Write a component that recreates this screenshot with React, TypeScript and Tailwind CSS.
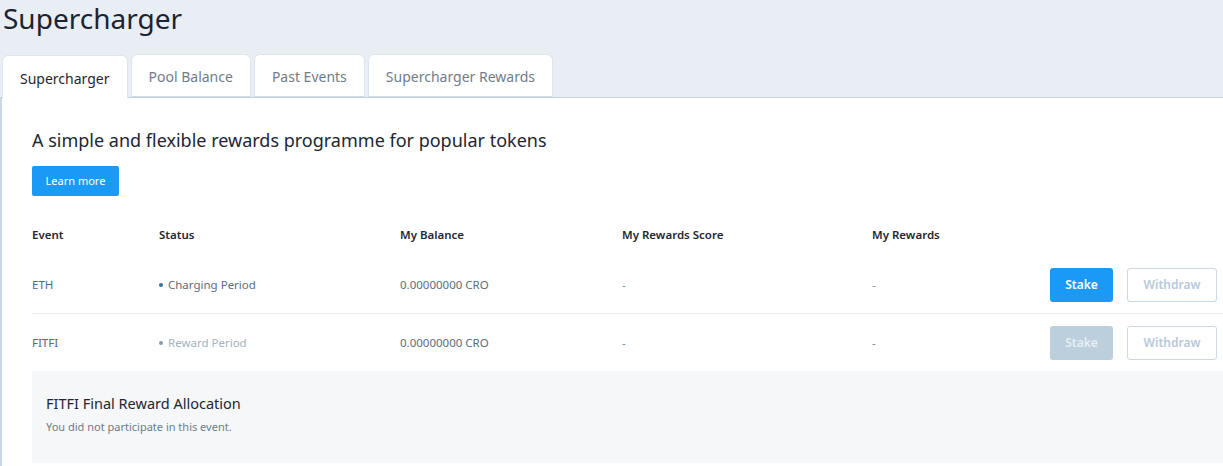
const font = { fontFamily: '"Noto Sans", "Open Sans", sans-serif' };

const tabs = ['Supercharger', 'Pool Balance', 'Past Events', 'Supercharger Rewards'];

type Row = {
    event: string;
    status: string;
    active: boolean;
};

const rows: Row[] = [
    { event: 'ETH', status: 'Charging Period', active: true },
    { event: 'FITFI', status: 'Reward Period', active: false },
];

const cols = 'grid grid-cols-[127px_241px_222px_250px_1fr_auto] items-center';

export default function App() {
    return (
        <div className="w-full h-[466px] overflow-hidden bg-[#e9edf4] text-[#1f2733]" style={font}>
            <h1 className="pl-[3px] text-[28px] leading-[36px] font-normal text-[#1c2431]">Supercharger</h1>

            {/* tabs */}
            <div className="mt-[19px] flex items-end gap-[3px] pl-[2px] border-b border-[#c3d2de] h-[43px]">
                {tabs.map((t, i) => (
                    <div
                        key={t}
                        className={
                            i === 0
                                ? 'h-[43px] -mb-px px-[17px] pt-[2px] flex items-center bg-white rounded-t-[6px] border border-b-0 border-[#dde5ee] text-[14px] text-[#1f2733]'
                                : 'h-[43px] px-[17px] pt-[2px] flex items-center bg-white rounded-t-[6px] border border-[#dde5ee] border-b-[#cfdbe5] text-[14px] text-[#707d89]'
                        }
                    >
                        {t}
                    </div>
                ))}
            </div>

            {/* panel */}
            <div className="bg-white border-l-2 border-[#c8d7e6] pl-[30px] pt-[30px] min-h-[400px]">
                <h2 className="text-[18px] leading-[24px] text-[#1e2633]">
                    A simple and flexible rewards programme for popular tokens
                </h2>
                <button className="mt-[14px] h-[30px] w-[87px] bg-[#1a9af5] rounded-[2px] text-white text-[11px]">
                    Learn more
                </button>

                <div className={`${cols} mt-[26px] h-[26px] pr-[6px] text-[11.5px] font-semibold text-[#1f2733]`}>
                    <span>Event</span>
                    <span>Status</span>
                    <span>My Balance</span>
                    <span>My Rewards Score</span>
                    <span>My Rewards</span>
                    <span />
                </div>

                {rows.map((r, i) => (
                    <div
                        key={r.event}
                        className={`${cols} h-[57px] pr-[6px] text-[11.5px] ${i === 0 ? 'mt-[9px] border-b border-[#e6edf3]' : ''}`}
                    >
                        <span className="text-[#3d6f99]">{r.event}</span>
                        <span className={`flex items-center gap-[5px] ${r.active ? 'text-[#5d6d7c]' : 'text-[#a3b2bf]'}`}>
                            <span className={`w-[4px] h-[4px] rounded-full ${r.active ? 'bg-[#3d6f99]' : 'bg-[#8a9aa8]'}`} />
                            {r.status}
                        </span>
                        <span className="text-[#5d6d7c]">0.00000000 CRO</span>
                        <span className="text-[#7d8b97]">-</span>
                        <span className="text-[#7d8b97]">-</span>
                        <div className="flex gap-[14px]">
                            <button
                                className={`h-[34px] w-[63px] rounded-[3px] text-[12px] font-semibold ${r.active ? 'bg-[#1a9af5] text-white' : 'bg-[#bccfdc] text-[#e8f0f6]'}`}
                            >
                                Stake
                            </button>
                            <button className="h-[34px] w-[90px] rounded-[3px] border border-[#c8d9e8] text-[12px] font-semibold text-[#b7c9d8] bg-white">
                                Withdraw
                            </button>
                        </div>
                    </div>
                ))}

                <div className="bg-[#f5f7f8] h-[92px] pl-[14px] pt-[22px]">
                    <div className="text-[14.5px] leading-[20px] text-[#1e2633]">FITFI Final Reward Allocation</div>
                    <div className="mt-[6px] text-[11px] text-[#707d89]">You did not participate in this event.</div>
                </div>
            </div>
        </div>
    );
}
